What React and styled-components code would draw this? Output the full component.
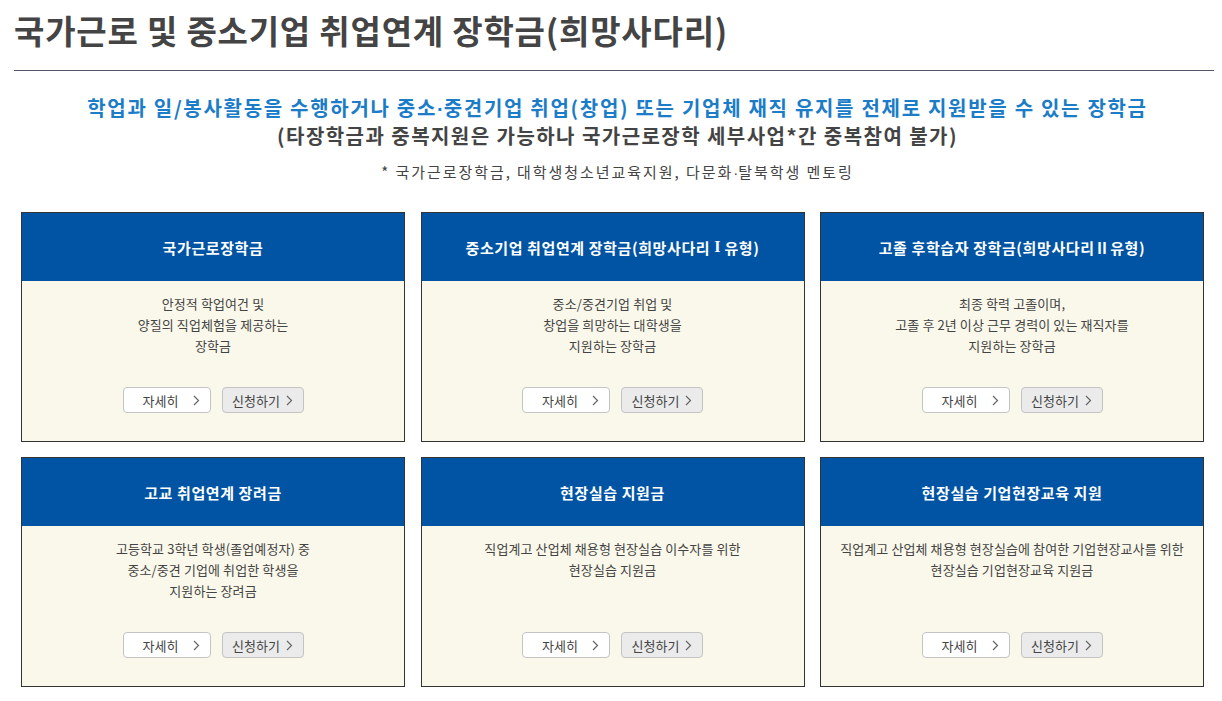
import React from 'react'
import styled, { createGlobalStyle } from 'styled-components'

const FONT = '"Noto Sans CJK KR", "Noto Sans", sans-serif'

const GlobalStyle = createGlobalStyle`
body {
    margin: 0;
    background: #fff;
    font-family: ${FONT};
    color: #444;
}
`

const CARDS = [
    {
        title: '국가근로장학금',
        lines: ['안정적 학업여건 및', '양질의 직업체험을 제공하는', '장학금'],
    },
    {
        title: '중소기업 취업연계 장학금(희망사다리 ',
        roman: 'I',
        tail: ' 유형)',
        lines: ['중소/중견기업 취업 및', '창업을 희망하는 대학생을', '지원하는 장학금'],
    },
    {
        title: '고졸 후학습자 장학금(희망사다리Ⅱ유형)',
        lines: ['최종 학력 고졸이며,', '고졸 후 2년 이상 근무 경력이 있는 재직자를', '지원하는 장학금'],
    },
    {
        title: '고교 취업연계 장려금',
        lines: ['고등학교 3학년 학생(졸업예정자) 중', '중소/중견 기업에 취업한 학생을', '지원하는 장려금'],
    },
    {
        title: '현장실습 지원금',
        lines: ['직업계고 산업체 채용형 현장실습 이수자를 위한', '현장실습 지원금'],
    },
    {
        title: '현장실습 기업현장교육 지원',
        lines: ['직업계고 산업체 채용형 현장실습에 참여한 기업현장교사를 위한', '현장실습 기업현장교육 지원금'],
    },
]

const Chevron = () => (
    <svg width="7" height="11" viewBox="0 0 7 11" fill="none">
        <path d="M1 1l4.5 4.5L1 10" stroke="#666" strokeWidth="1.2" />
    </svg>
)

export default function App() {
    return (
        <StyledPage>
            <GlobalStyle />
            <StyledTitle>국가근로 및 중소기업 취업연계 장학금(희망사다리)</StyledTitle>
            <StyledHr />
            <StyledIntro>
                <StyledLead>
                    학업과 일/봉사활동을 수행하거나 중소<StyledDot>·</StyledDot>중견기업 취업(창업) 또는 기업체 재직 유지를 전제로 지원받을 수 있는 장학금
                </StyledLead>
                <StyledSub>(타장학금과 중복지원은 가능하나 국가근로장학 세부사업*간 중복참여 불가)</StyledSub>
                <StyledNote>
                    * 국가근로장학금, 대학생청소년교육지원, 다문화<StyledDot>·</StyledDot>탈북학생 멘토링
                </StyledNote>
            </StyledIntro>
            <StyledGrid>
                {CARDS.map((card, i) => (
                    <StyledCard key={i}>
                        <StyledCardHead>
                            {card.title}
                            {card.roman && <StyledRoman>{card.roman}</StyledRoman>}
                            {card.tail}
                        </StyledCardHead>
                        <StyledCardBody>
                            <StyledDesc>
                                {card.lines.map((line) => (
                                    <div key={line}>{line}</div>
                                ))}
                            </StyledDesc>
                            <StyledButtons>
                                <StyledButton $wide>
                                    자세히 <Chevron />
                                </StyledButton>
                                <StyledButton $gray>
                                    신청하기 <Chevron />
                                </StyledButton>
                            </StyledButtons>
                        </StyledCardBody>
                    </StyledCard>
                ))}
            </StyledGrid>
        </StyledPage>
    )
}

const StyledPage = styled.div`
width: 1200px;
padding: 0 0 0 14px;
`

const StyledTitle = styled.h1`
margin: 0;
padding-top: 6px;
height: 50px;
font-size: 33px;
line-height: 48px;
font-weight: 700;
color: #444;
letter-spacing: 0.8px;
`

const StyledHr = styled.div`
margin-top: 14px;
border-bottom: 1px solid #55556a;
width: 1200px;
`

const StyledIntro = styled.div`
display: flex;
flex-direction: column;
align-items: center;
padding-top: 23px;
padding-left: 7px;
`

const StyledDot = styled.span`
font-family: "Liberation Sans", sans-serif;
letter-spacing: 0;
`

const StyledRoman = styled.span`
font-family: "Liberation Serif", serif;
font-size: 16px;
letter-spacing: 0;
`

const StyledLead = styled.p`
margin: 0;
font-size: 20px;
line-height: 28px;
font-weight: 700;
color: #1b7cc8;
letter-spacing: 1.7px;
`

const StyledSub = styled.p`
margin: 0;
font-size: 20px;
line-height: 26px;
font-weight: 700;
color: #444;
letter-spacing: 1.45px;
`

const StyledNote = styled.p`
margin: 12px 0 0;
font-size: 15px;
line-height: 22px;
color: #444;
letter-spacing: 1.95px;
`

const StyledGrid = styled.div`
display: grid;
grid-template-columns: repeat(3, 384px);
column-gap: 15.5px;
row-gap: 15px;
margin: 28px 0 0 7px;
`

const StyledCard = styled.div`
display: flex;
flex-direction: column;
height: 230px;
box-sizing: border-box;
border: 1px solid #333;
background: #faf8ea;
`

const StyledCardHead = styled.div`
display: flex;
align-items: center;
justify-content: center;
white-space: pre;
height: 68px;
background: #0054a3;
color: #fff;
font-size: 15px;
font-weight: 700;
letter-spacing: 0.6px;
`

const StyledCardBody = styled.div`
flex: 1;
display: flex;
flex-direction: column;
align-items: center;
padding: 12px 0 28px;
`

const StyledDesc = styled.div`
text-align: center;
font-size: 13px;
line-height: 21px;
color: #444;
letter-spacing: 0.1px;
`

const StyledButtons = styled.div`
margin-top: auto;
display: flex;
gap: 11px;
`

const StyledButton = styled.button`
display: flex;
align-items: center;
justify-content: ${(p) => (p.$wide ? 'space-between' : 'center')};
gap: 6px;
box-sizing: border-box;
width: ${(p) => (p.$wide ? '88px' : '82px')};
height: 26px;
padding: ${(p) => (p.$wide ? '0 10px 0 19px' : '0 8px')};
border: 1px solid #c4c4c4;
border-radius: 4px;
background: ${(p) => (p.$gray ? '#ebebeb' : '#fff')};
font-family: ${FONT};
font-size: 13px;
color: #444;
cursor: pointer;
`
